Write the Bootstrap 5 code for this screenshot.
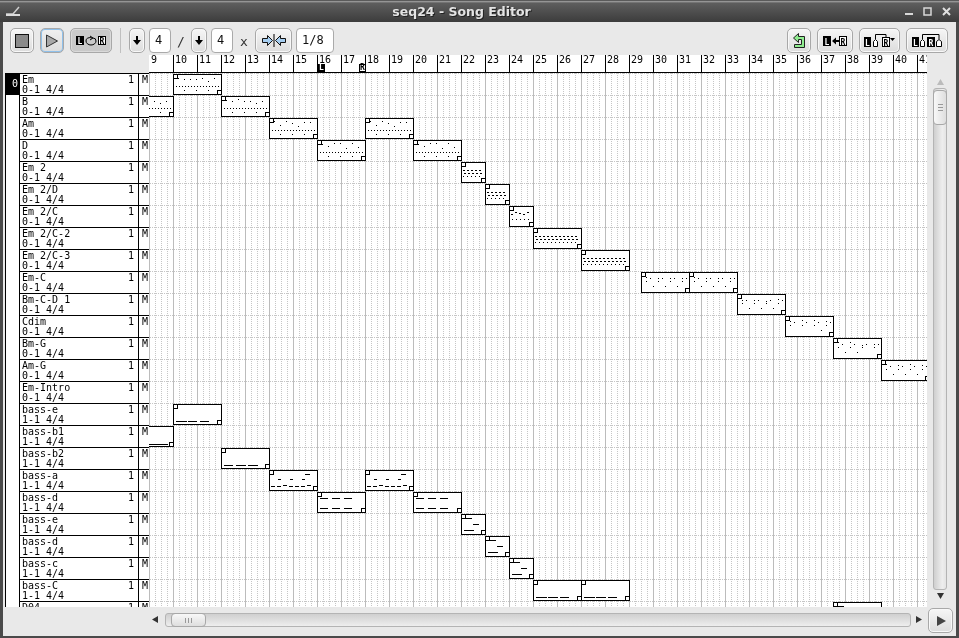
<!DOCTYPE html>
<html lang="en">
<head>
    <meta charset="UTF-8">
    <title>seq24 - Song Editor</title>
    <link href="https://cdn.jsdelivr.net/npm/bootstrap@5.3.0/dist/css/bootstrap.min.css" rel="stylesheet">
    <style>
        html, body { margin: 0; height: 100%; overflow: hidden; background: #4a4a4a; }
        svg { display: block; }
        .app-frame { width: 959px; height: 638px; background: #4a4a4a; will-change: transform; }
        .title-bar {
            height: 22px; padding: 0 8px 0 5px; color: #e4e4e4;
            background: linear-gradient(#5a5a5a 0, #5a5a5a 1px, #a0a0a0 1px, #8a8a8a 2px, #5e5e5e 3px, #3c3c3c 100%);
            font: bold 12.5px "DejaVu Sans", sans-serif; text-shadow: 1px 1px 0 #222;
        }
        .title-text { left: 0; right: 36px; top: 4px; text-align: center; }
        .wm-btns { gap: 10px; }
        .client { margin: 0 3px 2px 3px; height: 614px; background: #e9e9e9; }
        .tool-bar { height: 33px; padding: 6px 8px 0 7px; }
        .tb-group { gap: 6px; }
        .tb-btn {
            height: 25px; padding: 0; border: 1px solid #a8a8a8; border-radius: 5px;
            background: linear-gradient(#f6f6f6, #dcdcdc); box-shadow: inset 0 0 0 1px #f8f8f8;
            display: flex; align-items: center; justify-content: center;
        }
        .tb-btn.is-on { background: #c9c9c9; box-shadow: inset 0 0 0 1px #dadada; }
        .tb-btn.is-focus { box-shadow: inset 0 0 0 1px #8fc0ea; background: linear-gradient(#f0f0f0, #dcdcdc); }
        .w16 { width: 16px; } .w22 { width: 22px; } .w24 { width: 24px; } .w36 { width: 36px; } .w37 { width: 37px; } .w42 { width: 42px; }
        .tb-sep { width: 1px; height: 25px; background: #c0c0c0; margin: 0 8px; }
        .tb-entry {
            height: 25px; min-height: 0; padding: 0 0 0 5px; border: 1px solid #aaa; border-radius: 4px;
            background: #fff; color: #111; font: 12px/23px "DejaVu Sans Mono", monospace;
        }
        .tb-text { height: 25px; text-align: center; color: #333; font: 13px/27px "DejaVu Sans Mono", monospace; }
        .w20 { width: 20px; }
        .editor { display: grid; grid-template-columns: 144px 778px 29px; grid-template-rows: 18px 534px 29px; margin-left: 2px; }
        .mono { font: 10px/10px "DejaVu Sans Mono", monospace; color: #000; }
        .ruler { background: #fff; border-bottom: 1px solid #000; overflow: hidden; }
        .beat { flex: 0 0 24px; height: 9px; padding-left: 2px; white-space: nowrap; line-height: 9px; box-shadow: -1px 0 0 #fff; }
        .beat-tick { flex: 0 0 1px; background: #000; margin-right: -1px; }
        .marker { position: absolute; top: 9px; width: 7px; height: 8px; font: bold 8px/8px "DejaVu Sans Mono", monospace; text-align: center; }
        .marker-l { left: 169px; background: #000; color: #fff; }
        .marker-r { left: 210px; background: #fff; color: #000; border: 1px solid #000; line-height: 6px; }
        .track-list { overflow: hidden; background: #fff; border-left: 1px solid #000; }
        .track-row { height: 22px; flex: 0 0 22px; }
        .track-num { width: 14px; padding-right: 1px; border-right: 1px solid #000; text-align: right; line-height: 20px; }
        .track-num.is-sel { background: #000; color: #fff; border-top: 1px solid #000; }
        .track-name { width: 119px; padding: 1px 0 0 2px; border-top: 1px solid #000; border-right: 1px solid #000; white-space: nowrap; }
        .track-mute { width: 10px; padding: 1px 0 0 3px; border-top: 1px solid #000; }
        .v-scroll { padding: 3px 0 0 6px; width: 20px; }
        .v-track { width: 14px; height: 502px; border: 1px solid #b4b4b4; border-radius: 3px; background: linear-gradient(90deg, #cfcfcf, #eeeeee 70%, #e4e4e4); }
        .v-thumb { width: 14px; height: 35px; margin: 1px 0 0 -1px; border: 1px solid #a8a8a8; border-radius: 4px; background: linear-gradient(90deg, #f8f8f8, #dedede); }
        .grip-v { width: 5px; height: 1px; background: #999; margin-bottom: 2px; }
        .arrow-box { width: 12px; height: 12px; }
        .h-scroll { grid-column: 1 / 4; padding-left: 147px; }
        .h-track { width: 746px; height: 14px; margin: 6px 5px 0 5px; border: 1px solid #b4b4b4; border-radius: 3px; background: linear-gradient(#cfcfcf, #eeeeee); }
        .h-thumb { width: 35px; height: 14px; margin: -1px 0 0 5px; border: 1px solid #a8a8a8; border-radius: 4px; background: linear-gradient(#f8f8f8, #dedede); }
        .grip-h { width: 1px; height: 5px; background: #999; margin-right: 2px; }
        .corner-btn { width: 25px; height: 25px; margin: 1px 0 0 4px; }
        .side-arrow { width: 8px; margin-top: 9px; }
        .bx-text { font: bold 8px "DejaVu Sans Mono", monospace; }
    </style>
</head>
<body>
<div class="app-frame d-flex flex-column">
    <div class="title-bar position-relative d-flex align-items-center">
        <svg width="16" height="12" viewBox="0 0 16 12"><path d="M1 9h7l6-7" fill="none" stroke="#cfcfcf" stroke-width="1.5"/><rect x="1" y="9" width="14" height="2" fill="#dcdcdc"/></svg>
        <div class="title-text position-absolute">seq24 - Song Editor</div>
        <div class="ms-auto d-flex align-items-center wm-btns">
            <svg width="8" height="9" viewBox="0 0 8 9"><rect y="6" width="8" height="2" fill="#d8d8d8"/></svg>
            <svg width="9" height="9" viewBox="0 0 9 9"><rect x="1" y="1" width="7" height="7" fill="none" stroke="#d8d8d8" stroke-width="1.5"/></svg>
            <svg width="9" height="9" viewBox="0 0 9 9"><path d="M1 1l7 7M8 1l-7 7" stroke="#e0e0e0" stroke-width="2"/></svg>
        </div>
    </div>
    <div class="client">
        <div class="tool-bar d-flex align-items-start">
            <div class="d-flex tb-group">
                <button class="btn tb-btn w24"><svg width="14" height="14"><rect x=".5" y=".5" width="13" height="13" fill="#8a8a8a" stroke="#111"/></svg></button>
                <button class="btn tb-btn w24 is-focus"><svg width="14" height="14"><path d="M1.5 1l11 6-11 6z" fill="#a8a8a8" stroke="#333"/></svg></button>
                <button class="btn tb-btn w42 is-on">
                    <svg width="30" height="11"><rect y="1" width="8" height="9" fill="#000"/><text x="1.500" y="9" fill="#fff" class="bx-text">L</text><path d="M10 6a4 3 0 0 1 6-3M14 1l3 2-3 2" fill="none" stroke="#000"/><path d="M10 6a5 4 0 0 0 10 0 3 3 0 0 0-3-3" fill="none" stroke="#000"/><rect x="22.500" y="1.500" width="7" height="8" fill="#fff" stroke="#000"/><text x="23.500" y="9" fill="#000" class="bx-text">R</text></svg>
                </button>
            </div>
            <div class="tb-sep"></div>
            <button class="btn tb-btn w16"><svg width="8" height="9"><path d="M3 0h2v4h3L4 9 0 4h3z" fill="#000"/></svg></button>
            <div class="form-control tb-entry ms-1 w22 flex-shrink-0">4</div>
            <div class="tb-text w20">/</div>
            <button class="btn tb-btn w16"><svg width="8" height="9"><path d="M3 0h2v4h3L4 9 0 4h3z" fill="#000"/></svg></button>
            <div class="form-control tb-entry ms-1 w22 flex-shrink-0">4</div>
            <div class="tb-text w22">x</div>
            <button class="btn tb-btn w37">
                <svg width="24" height="13"><path d="M.5 4.500h5V1.500l5 5-5 5v-3h-5z" fill="#a5cdf0" stroke="#111"/><path d="M23.500 4.500h-5V1.500l-5 5 5 5v-3h5z" fill="#a5cdf0" stroke="#111"/><rect x="11.500" width="1" height="13" fill="#000"/></svg>
            </button>
            <div class="form-control tb-entry flex-shrink-0 ms-1" style="width:38px">1/8</div>
            <div class="d-flex ms-auto tb-group">
                <button class="btn tb-btn w24"><svg width="13" height="15"><path d="M.5 5L5.500.5v3h6v11h-10v-3h7v-5h-3v3z" fill="#90ee90" stroke="#222"/></svg></button>
                <button class="btn tb-btn w36">
                    <svg width="24" height="10"><rect width="8" height="10" fill="#000"/><text x="1.500" y="8.500" fill="#fff" class="bx-text">L</text><path d="M9 5l4-3.500V4h3v2h-3v2.500z" fill="#000"/><rect x="16.500" y=".5" width="7" height="9" fill="#fff" stroke="#000"/><text x="17.500" y="8.500" class="bx-text">R</text></svg>
                </button>
                <button class="btn tb-btn" style="width:41px">
                    <svg width="31" height="13"><rect y="3" width="7" height="10" fill="#000"/><text x="1" y="11.500" fill="#fff" class="bx-text">L</text><path d="M9.500 12.500v-5l2-2 2 2v5z" fill="#fff" stroke="#000"/><path d="M11.500 5V.5h10.500V3" fill="none" stroke="#000"/><rect x="18.500" y="3.500" width="7" height="9" fill="#fff" stroke="#000"/><text x="19.500" y="11.500" class="bx-text">R</text><path d="M26 4h5l-2.500 3z" fill="#000"/></svg>
                </button>
                <button class="btn tb-btn w42">
                    <svg width="30" height="13"><rect y="3" width="7" height="10" fill="#000"/><text x="1" y="11.500" fill="#fff" class="bx-text">L</text><path d="M8.500 12.500v-5l2-2 2 2v5z" fill="#fff" stroke="#000"/><path d="M10.500 5V.5h16.500V5" fill="none" stroke="#000"/><rect x="15.500" y="3.500" width="7" height="9" fill="#000" stroke="#000"/><text x="16.500" y="11.500" fill="#fff" class="bx-text">R</text><path d="M24.500 12.500v-5l2.500-2 2.500 2v5z" fill="#fff" stroke="#000"/></svg>
                </button>
            </div>
        </div>
        <div class="editor">
            <div></div>
            <div class="ruler mono d-flex position-relative" id="ruler"></div>
            <div></div>

            <div class="track-list mono d-flex flex-column" id="tracks"></div>
            <svg id="roll" width="778" height="534" viewBox="0 0 778 534" shape-rendering="crispEdges"></svg>
            <div class="v-scroll d-flex flex-column align-items-center">
                <div class="arrow-box d-flex align-items-center justify-content-center"><svg width="7" height="6"><path d="M3.500 0L7 6H0z" fill="#bbb"/></svg></div>
                <div class="v-track flex-shrink-0">
                    <div class="v-thumb d-flex flex-column align-items-center justify-content-center"><div class="grip-v"></div><div class="grip-v"></div><div class="grip-v mb-0"></div></div>
                </div>
                <div class="arrow-box d-flex align-items-center justify-content-center"><svg width="7" height="6"><path d="M0 0h7L3.500 6z" fill="#333"/></svg></div>
            </div>

            <div class="h-scroll d-flex align-items-start">
                <div class="side-arrow"><svg width="6" height="7"><path d="M6 0v7L0 3.500z" fill="#333"/></svg></div>
                <div class="h-track flex-shrink-0">
                    <div class="h-thumb d-flex align-items-center justify-content-center"><div class="grip-h"></div><div class="grip-h"></div><div class="grip-h me-0"></div></div>
                </div>
                <div class="side-arrow"><svg width="6" height="7"><path d="M0 0v7l6-3.500z" fill="#333"/></svg></div>
                <button class="btn tb-btn corner-btn"><svg width="10" height="10"><path d="M1 0v10l9-5z" fill="#444"/></svg></button>
            </div>
        </div>
    </div>
</div>

<script>
    // beat ruler, 9 to 41; ticks are drawn as a black sliver at each cell's left
    const ruler = document.getElementById('ruler');
    for (let b = 9; b <= 41; b++) {
        if (b > 9) ruler.insertAdjacentHTML('beforeend', '<div class="beat-tick"></div>');
        ruler.insertAdjacentHTML('beforeend', `<div class="beat">${b}</div>`);
    }
    ruler.insertAdjacentHTML('beforeend', '<div class="marker marker-l">L</div><div class="marker marker-r">R</div>');

    // name, kind of notes, and the clips as [start x, end x] in window pixels
    const rows = [
        ['Em', 'arp', [[173, 221]]],
        ['B', 'arp', [[125, 173], [221, 269]]],
        ['Am', 'arp', [[269, 317], [365, 413]]],
        ['D', 'arp', [[317, 365], [413, 461]]],
        ['Em 2', 'dense', [[461, 485]]],
        ['Em 2/D', 'dense', [[485, 509]]],
        ['Em 2/C', 'wave', [[509, 533]]],
        ['Em 2/C-2', 'dense', [[533, 581]]],
        ['Em 2/C-3', 'dense', [[581, 629]]],
        ['Em-C', 'sparse', [[641, 689], [689, 737]]],
        ['Bm-C-D 1', 'sparse', [[737, 785]]],
        ['Cdim', 'sparse', [[785, 833]]],
        ['Bm-G', 'sparse', [[833, 881]]],
        ['Am-G', 'sparse', [[881, 929]]],
        ['Em-Intro', '', []],
        ['bass-e', 'line', [[173, 221]]],
        ['bass-b1', 'line2', [[125, 173]]],
        ['bass-b2', 'line', [[221, 269]]],
        ['bass-a', 'walk', [[269, 317], [365, 413]]],
        ['bass-d', 'dash', [[317, 365], [413, 461]]],
        ['bass-e', 'step', [[461, 485]]],
        ['bass-d', 'step', [[485, 509]]],
        ['bass-c', 'step', [[509, 533]]],
        ['bass-C', 'line', [[533, 581], [581, 629]]],
        ['D04', 'step', [[833, 881]]]
    ];

    const list = document.getElementById('tracks');
    rows.forEach((r, i) => {
        const bus = i < 15 ? '0-1 4/4' : '1-1 4/4';
        list.insertAdjacentHTML('beforeend', `
            <div class="track-row d-flex">
                <div class="track-num ${i === 0 ? 'is-sel' : ''}">${i === 0 ? '0' : ''}</div>
                <div class="track-name">
                    <div class="d-flex justify-content-between pe-1"><span>${r[0]}</span><span>1</span></div>
                    <div>${bus}</div>
                </div>
                <div class="track-mute">M</div>
            </div>`);
    });

    // small repeatable random so the same sequence gets the same dots
    function seeded(text) {
        let s = 7;
        for (const c of text) s = (s * 31 + c.charCodeAt(0)) % 65521;
        return () => (s = (s * 75 + 74) % 65537) / 65537;
    }

    function noteRects(kind, w, name) {
        const rnd = seeded(name);
        const out = [];
        const dot = (x, y, l = 1) => {
            if (x > 1 && x + l < w - 1) out.push(`<rect x="${x}" y="${y}" width="${l}" height="1"/>`);
        };
        if (kind === 'arp') {
            for (let x = 3; x < w; x += 3) dot(x, 12);
            for (let x = 5; x < w; x += 6) dot(x, 3 + Math.floor(rnd() * 6));
            for (let x = 11; x < w; x += 12) dot(x, 16);
        } else if (kind === 'dense') {
            for (let x = 2; x < w; x += 4) { dot(x, 8, 2); dot(x + 1, 11, 2); dot(x, 14); }
        } else if (kind === 'wave') {
            for (let x = 2; x < w; x += 4) { dot(x, 6 + (x % 3), 2); dot(x + 1, 13); }
        } else if (kind === 'sparse') {
            for (let x = 5; x < w; x += 12) {
                dot(x, 4 + Math.floor(rnd() * 4));
                dot(x, 9);
                dot(x + 4, 6);
                if (rnd() > .5) dot(x + 7, 14);
            }
        } else if (kind === 'line') {
            for (let x = 3; x < w; x += 12) dot(x, 17, 9 + Math.floor(rnd() * 3));
        } else if (kind === 'line2') {
            dot(2, 15, 45);
            dot(2, 18, 41);
        } else if (kind === 'walk') {
            for (let x = 2; x < w; x += 6) dot(x, 15 + Math.floor(rnd() * 2), 4);
            for (let x = 9; x < w; x += 12) dot(x, 9, 3);
            dot(w - 12, 4, 5);
        } else if (kind === 'dash') {
            for (let x = 3; x < w; x += 12) { dot(x, 6, 8); dot(x, 16, 8); }
        } else if (kind === 'step') {
            dot(3, 4, 8);
            dot(3, 16, 10);
            dot(12, 10, 6);
        }
        return out.join('');
    }

    // the roll: dotted grid, then one box per clip, handles in two corners
    const dots = '#c6c6c6';
    let svg = `<defs><pattern id="cell" width="24" height="22" patternUnits="userSpaceOnUse" y="0">
        <rect width="24" height="22" fill="#fff"/>
        <rect width="1" height="22" fill="#bcbcbc"/>`;
    for (let y = 0; y < 22; y += 2) {
        svg += `<rect x="6" y="${y}" width="1" height="1" fill="${dots}"/><rect x="12" y="${y}" width="1" height="1" fill="${dots}"/><rect x="18" y="${y}" width="1" height="1" fill="${dots}"/>`;
    }
    for (let x = 1; x < 24; x += 2) svg += `<rect x="${x}" y="0" width="1" height="1" fill="${dots}"/>`;
    svg += `</pattern></defs><rect width="778" height="534" fill="url(#cell)"/>`;

    rows.forEach((r, i) => {
        const top = i * 22 + 1;
        r[2].forEach(([a, b]) => {
            const x = a - 149, w = b - a;
            svg += `<g transform="translate(${x} ${top})">
                <rect x=".5" y=".5" width="${w}" height="20" fill="#fff" stroke="#000"/>
                <rect x=".5" y=".5" width="4" height="4" fill="#fff" stroke="#000"/>
                <rect x="${w - 4 + .5}" y="16.500" width="4" height="4" fill="#fff" stroke="#000"/>
                <g fill="#000">${noteRects(r[1], w, r[0])}</g>
            </g>`;
        });
    });
    document.getElementById('roll').innerHTML = svg;
</script>
<script src="https://cdn.jsdelivr.net/npm/bootstrap@5.3.0/dist/js/bootstrap.bundle.min.js"></script>
</body>
</html>
